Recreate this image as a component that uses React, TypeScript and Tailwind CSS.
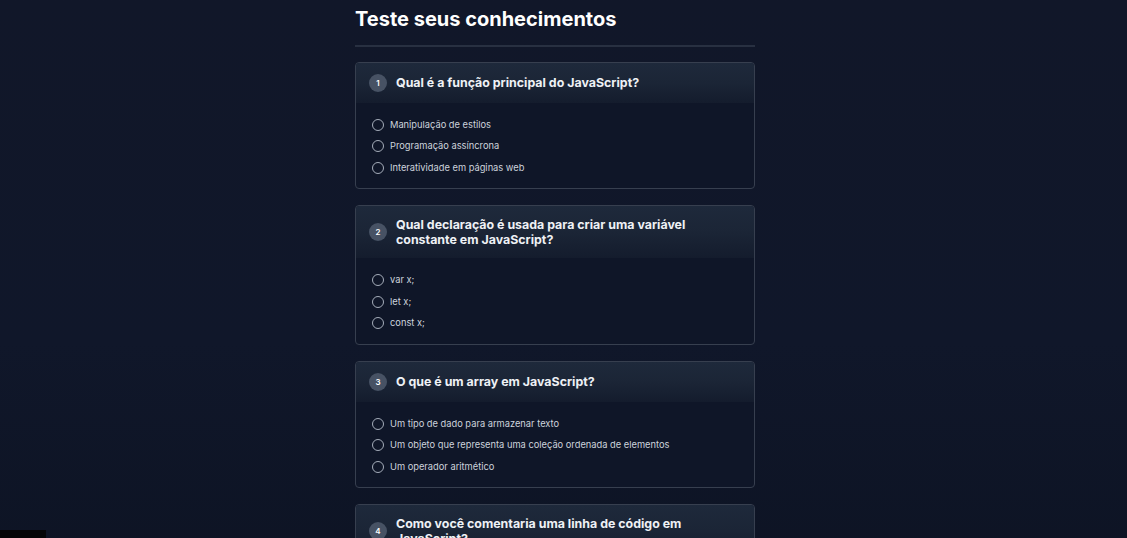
import React from "react";

type Q = { q: string; opts: string[] };

const questions: Q[] = [
  {
    q: "Qual é a função principal do JavaScript?",
    opts: ["Manipulação de estilos", "Programação assíncrona", "Interatividade em páginas web"],
  },
  {
    q: "Qual declaração é usada para criar uma variável constante em JavaScript?",
    opts: ["var x;", "let x;", "const x;"],
  },
  {
    q: "O que é um array em JavaScript?",
    opts: [
      "Um tipo de dado para armazenar texto",
      "Um objeto que representa uma coleção ordenada de elementos",
      "Um operador aritmético",
    ],
  },
  {
    q: "Como você comentaria uma linha de código em JavaScript?",
    opts: ["// comentário", "/* comentário */", "# comentário"],
  },
];

function Card({ n, item }: { n: number; item: Q }) {
  return (
    <div className="rounded-[4px] border border-[#373f4f] bg-[#0f1628] overflow-hidden">
      <div className="flex items-center gap-[9px] px-[13px] py-[11px] bg-gradient-to-b from-[#1e293b] via-[#1b2536] to-[#141c2d]">
        <div className="w-[18px] h-[18px] shrink-0 rounded-full bg-[#475264] flex items-center justify-center text-[8px] font-semibold text-white leading-none">
          {n}
        </div>
        <div className="text-[12.4px] leading-[15px] font-bold text-[#eef1f5] pr-[40px]">{item.q}</div>
      </div>
      <div className="px-4 pt-[11.5px] pb-[9.5px] flex flex-col">
        {item.opts.map((o) => (
          <div key={o} className="h-[21.5px] flex items-center gap-[6px]">
            <span className="w-[12px] h-[12px] rounded-full border-[1.3px] border-[#a5adba] shrink-0" />
            <span className="text-[9.3px] text-[#cdd3dc]">{o}</span>
          </div>
        ))}
      </div>
    </div>
  );
}

export default function App() {
  return (
    <div
      className="min-h-[538px] w-full bg-gradient-to-b from-[#111729] via-[#10172a] to-[#0c1221] relative flex justify-center pr-[17px]"
      style={{ fontFamily: "Inter, 'Noto Sans', sans-serif" }}
    >
      <div className="w-[400px] pt-[5px] pb-10">
        <h1 className="text-[20px] leading-[28px] font-bold text-white">
          Teste seus conhecimentos
        </h1>
        <div className="mt-[12px] h-[1.5px] bg-[#283041]" />
        <div className="mt-[15px] flex flex-col gap-[16px]">
          {questions.map((q, i) => (
            <Card key={i} n={i + 1} item={q} />
          ))}
        </div>
      </div>
      <div className="fixed left-0 top-[530px] w-[46px] h-[8px] bg-[#050608]" />
    </div>
  );
}
